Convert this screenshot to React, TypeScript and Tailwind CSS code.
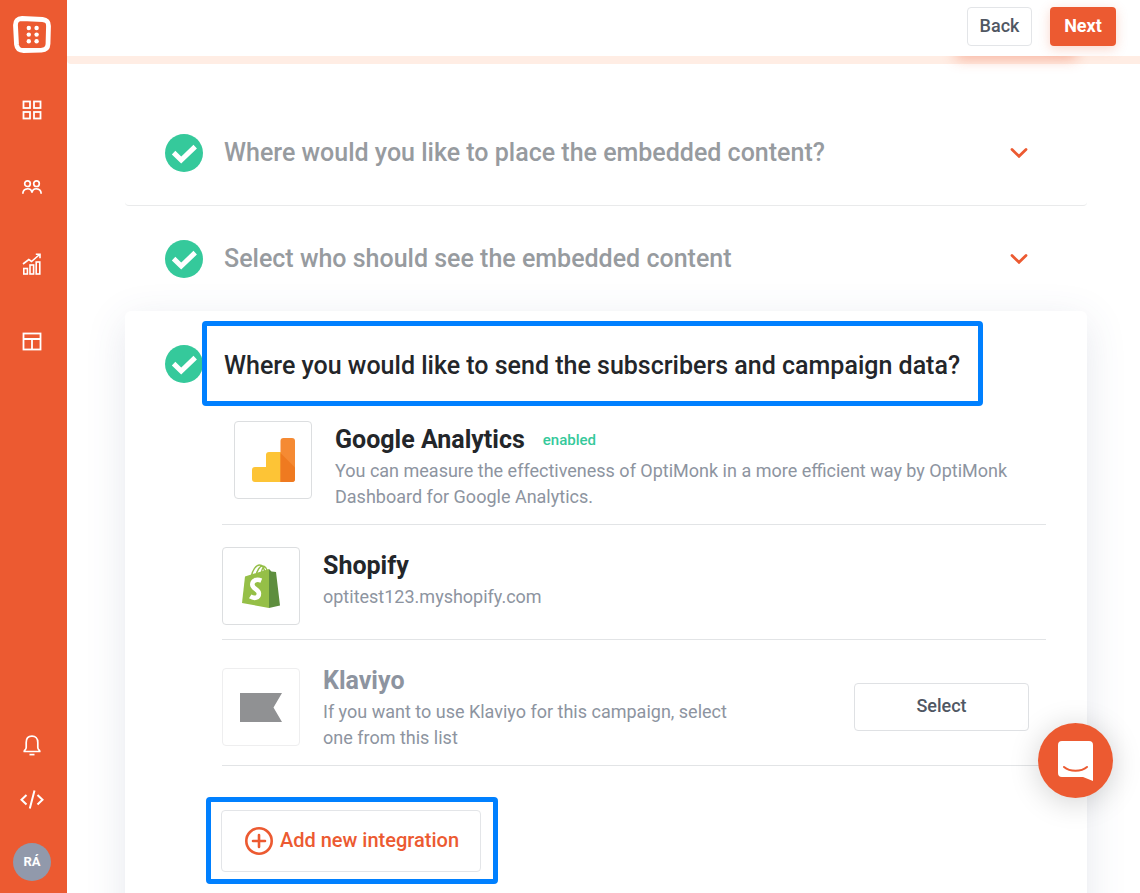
import type { ReactNode } from "react";

const steps = [
  "Where would you like to place the embedded content?",
  "Select who should see the embedded content",
];

const CheckCircle = () => (
  <svg className="h-[38px] w-[38px] shrink-0" viewBox="0 0 38 38" aria-hidden="true">
    <circle cx="19" cy="19" r="19" fill="#35c99b" />
    <path d="M8.6 18.600 16.200 26 30.200 12.600" fill="none" stroke="#fff" strokeWidth="5" />
  </svg>
);

const Chevron = () => (
  <svg className="h-[10px] w-[18px]" viewBox="0 0 18 10" fill="none" aria-hidden="true">
    <path d="M2 1.500 9 8.300 16 1.500" stroke="#ec5a31" strokeWidth="2.800" strokeLinecap="round" />
  </svg>
);

const AnalyticsLogo = () => (
  <svg className="h-11 w-[43px]" viewBox="0 0 43 44" aria-hidden="true">
    <path d="M29 14H17a3 3 0 0 0-3 3v12H3a3 3 0 0 0-3 3v9a3 3 0 0 0 3 3h26z" fill="#fdc436" />
    <path d="M28.500 3a3 3 0 0 1 3-3H40a3 3 0 0 1 3 3v38a3 3 0 0 1-3 3H28.500z" fill="#f58a33" />
    <path d="M28.500 15 43 29.500V41a3 3 0 0 1-3 3H28.500z" fill="#ef7a20" />
  </svg>
);

const ShopifyLogo = () => (
  <svg className="h-11 w-[38px]" viewBox="0 0 38 44" aria-hidden="true">
    <path
      d="M9 13C10.500 6 14 1 17.500 1c3 0 5 4 5.500 9M14 12C15 6 18 2 20.500 2c2.500 0 4.500 3 5 7M19 10c.5-3 1.500-6 3-8"
      fill="none"
      stroke="#95bf47"
      strokeWidth="1.400"
    />
    <path d="M3 12.500 27 5V44L0 39z" fill="#95bf47" />
    <path d="M27 5 29.500 7.500 34 8l4 33.500L27 44z" fill="#5e8e3e" />
    <path
      d="M19.300 16.600C14 14.400 10.300 17 10.300 20.600c0 4.300 6.600 4.900 6.600 8.900 0 4.500-4.500 5.500-8.700 2.900"
      fill="none"
      stroke="#fff"
      strokeWidth="4.600"
    />
  </svg>
);

const KlaviyoLogo = () => (
  <svg className="h-[29px] w-[42px]" viewBox="0 0 42 29" aria-hidden="true">
    <path d="M0 0h42l-8.500 14.500L42 29H0z" fill="#909193" />
  </svg>
);

const NavLink = ({ label, children }: { label: string; children: ReactNode }) => (
  <a href="#" aria-label={label} className="flex h-5 w-6 items-center justify-center">
    {children}
  </a>
);

const Sidebar = () => (
  <aside className="flex w-[67px] shrink-0 flex-col items-center bg-[#ec5a31] pr-[3px] text-white">
    <a href="#" aria-label="Home" className="mt-4">
      <svg className="h-[37px] w-[38px]" viewBox="0 0 38 37">
        <path
          d="M9 2.500 29.500 3.500C34 4 35.500 6 35.500 10L35 28C34.800 32.500 32.500 34 28.500 34.200L10.500 34.500C6 34.500 4 32.500 3.500 28.500L2.500 9.500C2.300 5 4.500 2.500 9 2.500z"
          fill="none"
          stroke="#fff"
          strokeWidth="4.800"
        />
        <g fill="#fff">
          <circle cx="15.800" cy="12" r="2.200" />
          <circle cx="23.600" cy="12" r="2.200" />
          <circle cx="15.800" cy="18.600" r="2.200" />
          <circle cx="23.600" cy="18.600" r="2.200" />
          <circle cx="15.800" cy="25.200" r="2.200" />
          <circle cx="23.600" cy="25.200" r="2.200" />
        </g>
      </svg>
    </a>

    <nav className="mt-[47px] flex flex-col gap-[57px]">
      <NavLink label="Dashboard">
        <svg width="20" height="20" viewBox="0 0 20 20" fill="none" stroke="currentColor" strokeWidth="1.800">
          <rect x="1.500" y="1.500" width="6.500" height="6.500" />
          <rect x="12" y="1.500" width="6.500" height="6.500" />
          <rect x="1.500" y="12" width="6.500" height="6.500" />
          <rect x="12" y="12" width="6.500" height="6.500" />
        </svg>
      </NavLink>
      <NavLink label="Subscribers">
        <svg width="20" height="14" viewBox="0 0 20 14" fill="none" stroke="currentColor" strokeWidth="1.700">
          <circle cx="5.500" cy="3.700" r="2.800" />
          <circle cx="14.500" cy="3.700" r="2.800" />
          <path d="M.9 13.800V13a4.600 4.600 0 0 1 9.100-.5A4.600 4.600 0 0 1 19.100 13v.8" />
        </svg>
      </NavLink>
      <NavLink label="Analytics">
        <svg width="20" height="22" viewBox="0 0 20 22" fill="none" stroke="currentColor" strokeWidth="1.600">
          <rect x="1.800" y="15.500" width="3.600" height="5.500" />
          <rect x="8" y="12" width="3.600" height="9" />
          <rect x="14.200" y="9" width="3.600" height="12" />
          <path d="M1 11 6.800 6.500 9.500 8.500 17 2M13.800 1.200H18v4" />
        </svg>
      </NavLink>
      <NavLink label="Templates">
        <svg width="20" height="19" viewBox="0 0 20 19" fill="none" stroke="currentColor" strokeWidth="1.800">
          <rect x="1.500" y="1.500" width="17" height="16" />
          <path d="M1.500 7h17M10 7v10.500" />
        </svg>
      </NavLink>
    </nav>

    <div className="mt-auto mb-3 flex flex-col items-center gap-[34px]">
      <NavLink label="Notifications">
        <svg width="18" height="21" viewBox="0 0 18 21" fill="none" stroke="currentColor" strokeWidth="1.700">
          <path
            d="M1.200 16.500c0-1.800 2-1.500 2-4V7.500C3.200 3.500 5.500 1.200 9 1.200s5.800 2.300 5.800 6.300v5c0 2.500 2 2.200 2 4z"
            strokeLinejoin="round"
          />
          <path d="M6.500 19.600h5" />
        </svg>
      </NavLink>
      <NavLink label="Embed code">
        <svg width="24" height="19" viewBox="0 0 24 19" fill="none" stroke="currentColor" strokeWidth="2">
          <path d="M6.500 5 1.500 9.700 6.500 14.400M17.500 5l5 4.700-5 4.700M14.500.5 9.800 18.500" />
        </svg>
      </NavLink>
      <button
        type="button"
        className="flex h-[38px] w-[38px] items-center justify-center rounded-full bg-[#9199ab] text-[13px] font-bold"
      >
        RÁ
      </button>
    </div>
  </aside>
);

const LogoBox = ({ faded, children }: { faded?: boolean; children: ReactNode }) => (
  <div
    className={
      "flex h-[78px] w-[78px] shrink-0 items-center justify-center rounded border " +
      (faded ? "border-[#eeeeef]" : "border-[#dcdee0]")
    }
  >
    {children}
  </div>
);

const App = () => {
  return (
    <div className="flex h-screen overflow-hidden bg-white font-[Roboto,sans-serif] text-[#23262a]">
      <Sidebar />

      <div className="flex min-w-0 flex-1 flex-col">
        <header className="relative z-10 flex h-14 shrink-0 items-start justify-end gap-[18px] bg-white pt-[7px] pr-6 text-lg font-medium">
          <button type="button" className="h-[39px] w-[65px] rounded border border-[#e3e5e8] pb-0.5 text-[#505763]">
            Back
          </button>
          <button
            type="button"
            className="h-[39px] w-[66px] rounded bg-[#ec5a31] pb-0.5 font-bold text-white shadow-[0_3px_12px_rgba(236,90,49,0.25)]"
          >
            Next
          </button>
        </header>

        {/* progress line, with the glow of the button above it */}
        <div className="relative h-2 shrink-0 rounded-bl bg-[#ffede4]">
          <div className="absolute right-[64px] bottom-2 h-4 w-[120px] shadow-[0_3px_14px_rgba(236,90,49,0.4)]" />
        </div>

        <main className="min-h-0 flex-1 overflow-hidden pt-9 pr-[53px] pl-[58px]">
          {steps.map((step, i) => (
            <h2 key={step} className={i === 0 ? "rounded border-b border-[#e9eaeb]" : ""}>
              <button
                type="button"
                className="flex h-[105px] w-full items-center pr-[59px] pl-10 text-left text-[25px] font-medium text-[#979b9f]"
              >
                <CheckCircle />
                <span className="ml-[21px] flex-1">{step}</span>
                <Chevron />
              </button>
            </h2>
          ))}

          <section className="rounded-md bg-white pt-[10px] pb-16 shadow-[0_10px_40px_rgba(60,80,120,0.13)]">
            <div className="flex items-center pl-10">
              <CheckCircle />
              <h2 className="relative -ml-px flex h-[85px] items-center rounded-sm border-[5px] border-[#0080ff] bg-white pt-1 pr-[18px] pl-[17px] text-[25px] font-medium">
                Where you would like to send the subscribers and campaign data?
              </h2>
            </div>

            <ul className="mr-[41px] ml-[97px] text-lg leading-[26px] text-[#8d94a0]">
              <li className="flex border-b border-[#e2e4e6] pt-[15px] pb-[14px] pl-3">
                <LogoBox>
                  <AnalyticsLogo />
                </LogoBox>
                <div className="mt-[3px] ml-[23px] max-w-[680px]">
                  <div className="mb-[3px] flex items-center gap-[18px]">
                    <h3 className="text-[25px] leading-[31px] font-bold text-[#23262a]">Google Analytics</h3>
                    <span className="text-[15px] font-medium text-[#35c99b]">enabled</span>
                  </div>
                  <p>
                    You can measure the effectiveness of OptiMonk in a more efficient way by OptiMonk Dashboard for
                    Google Analytics.
                  </p>
                </div>
              </li>

              <li className="flex border-b border-[#e2e4e6] pt-[22px] pb-[14px]">
                <LogoBox>
                  <ShopifyLogo />
                </LogoBox>
                <div className="mt-[3px] ml-[23px]">
                  <h3 className="mb-[3px] text-[25px] leading-[31px] font-bold text-[#23262a]">Shopify</h3>
                  <p>optitest123.myshopify.com</p>
                </div>
              </li>

              <li className="flex items-start border-b border-[#e2e4e6] pt-[25px] pr-[17px] pb-[14px]">
                <div className="pt-[3px]">
                  <LogoBox faded>
                    <KlaviyoLogo />
                  </LogoBox>
                </div>
                <div className="ml-[23px] max-w-[420px]">
                  <h3 className="mb-[3px] text-[25px] leading-[31px] font-bold">Klaviyo</h3>
                  <p>If you want to use Klaviyo for this campaign, select one from this list</p>
                </div>
                <button
                  type="button"
                  className="mt-[18px] ml-auto h-12 w-[175px] rounded border border-[#dfe1e4] pb-0.5 font-medium text-[#505763]"
                >
                  Select
                </button>
              </li>
            </ul>

            <div className="mt-[31px] ml-[81px] w-fit rounded-sm border-[5px] border-[#0080ff] pt-2 pr-3 pb-[7px] pl-[10px]">
              <button
                type="button"
                className="flex h-[62px] w-[260px] items-center justify-center gap-[7px] rounded border border-[#e3e5e8] pl-0.5 text-xl font-medium text-[#ec5a31]"
              >
                <svg className="h-7 w-7" viewBox="0 0 28 28" fill="none" stroke="currentColor" aria-hidden="true">
                  <circle cx="14" cy="14" r="12.700" strokeWidth="2.600" />
                  <path d="M14 8v12M8 14h12" strokeWidth="2.600" strokeLinecap="round" />
                </svg>
                <span className="pb-0.5">Add new integration</span>
              </button>
            </div>
          </section>
        </main>
      </div>

      <button
        type="button"
        aria-label="Open chat"
        className="fixed right-[27px] bottom-[95px] z-20 flex h-[75px] w-[75px] items-center justify-center rounded-full bg-[#ec5a31] shadow-[0_4px_30px_rgba(0,0,0,0.18)]"
      >
        <svg className="h-10 w-[35px]" viewBox="0 0 35 40" aria-hidden="true">
          <path d="M4 0h27a4 4 0 0 1 4 4v36l-10-4H4a4 4 0 0 1-4-4V4a4 4 0 0 1 4-4z" fill="#fff" />
          <path d="M6 26c6 5 17 5 23 0" fill="none" stroke="#ec5a31" strokeWidth="2" strokeLinecap="round" />
        </svg>
      </button>
    </div>
  );
};

export default App;
